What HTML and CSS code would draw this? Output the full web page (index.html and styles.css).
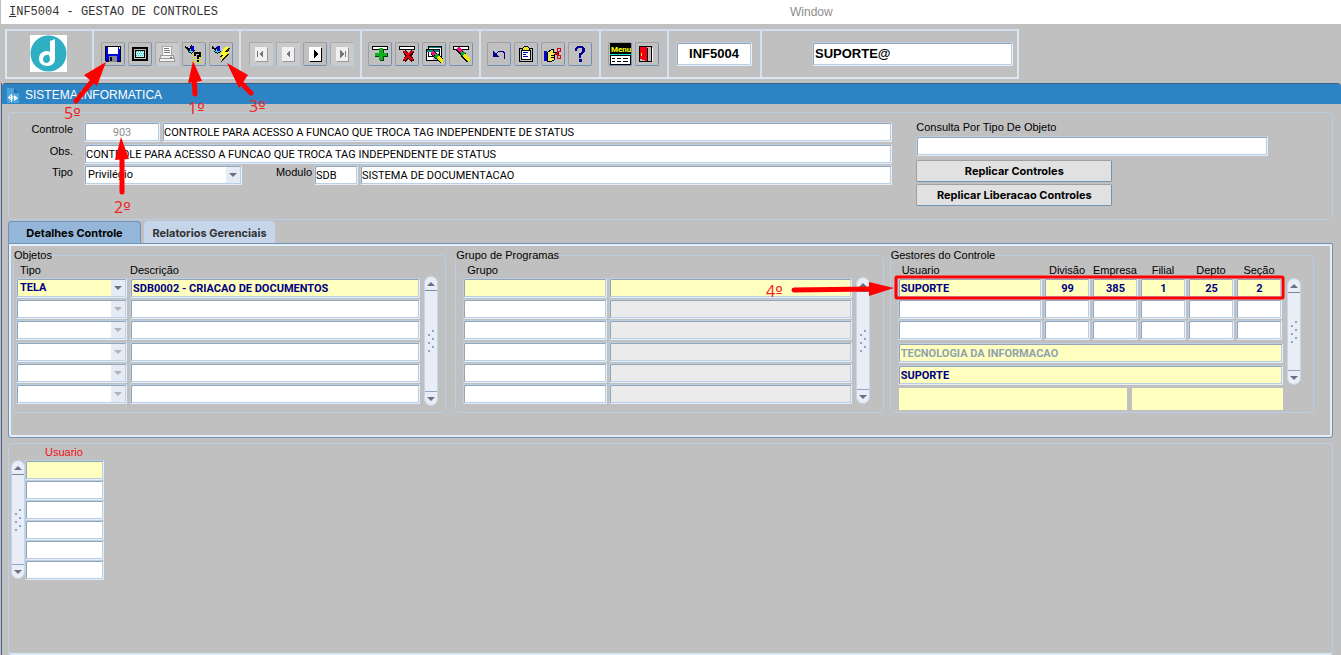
FILE: index.html
```html
<!DOCTYPE html>
<html lang="pt-BR">
<head>
<meta charset="utf-8">
<title>INF5004 - Gestao de Controles</title>
<link rel="stylesheet" href="styles.css">
</head>
<body>
<header class="menubar">
  <h1 class="menubar-title"><u>I</u>NF5004 - GESTAO DE CONTROLES</h1>
  <span class="menubar-window">Window</span>
</header>

<div class="toolbar-area">
  <div class="toolbar">
    <div class="group group-logo">
      <svg class="logo" viewBox="0 0 37 37" aria-label="Logo" role="img">
        <rect width="37" height="37" fill="#fff"/>
        <circle cx="18.500" cy="18.500" r="18" fill="#2fafc3"/>
        <path d="M20 6l5-2v19q0 8-8 8-8-1-8-7 0-7 7-8 3 0 4 1zM19 20q-5-1-6 4 0 4 4 4 3-1 3-4z" fill="#fff" fill-rule="evenodd"/>
      </svg>
    </div>
    <div class="group group-file">
      <button class="tool" aria-label="Salvar"><svg class="icon" viewBox="0 0 18 18"><path fill="#0000e8" stroke="#000" d="M1.500 1.500h15v15h-14l-1-1z"/><path fill="#fff" d="M4 2h10v7H4z"/><path fill="#888" d="M5 11h8v6H5z"/><path d="M6 12h2v4H6z"/><path fill="#fff" d="M15 2h1v2h-1z"/></svg></button>
      <button class="tool" aria-label="Tela"><svg class="icon" viewBox="0 0 18 18"><path fill="#c0c0c0" stroke="#000" stroke-width="2" d="M2 3h14v12H2z"/><path fill="#b8f4f4" stroke="#000" d="M4.500 5.500h9v7h-9z"/><path fill="none" stroke="#35bcbc" stroke-dasharray="1 1" d="M5 6.500h8M6 8.500h7M5 10.500h8"/></svg></button>
      <button class="tool off" aria-label="Imprimir" disabled><svg class="icon" viewBox="0 0 18 18"><path fill="#fff" stroke="#aaa" d="M4.500 1.500h9v9h-9z"/><path stroke="#777" d="M6 3.500h5M6 5.500h6M6 7.500h6"/><path fill="#f0f0f0" stroke="#999" d="M2.500 10.500h13v3h-13zM1.500 13.500h15v3h-15z"/><path fill="#666" d="M12 12h2v1h-2z"/></svg></button>
      <button class="tool" aria-label="Entrar consulta"><svg class="icon" viewBox="0 0 18 18"><path stroke="#000" stroke-width="2" d="M0 2l5 3"/><path fill="#39d8ec" stroke="#000" d="M3.500 6.500l3-6 3 5-3 3z"/><path fill="#0000d8" d="M6 1h3v5H6z"/><path fill="none" stroke="#e8e800" stroke-width="10" stroke-dasharray="1 1" d="M8 12.500h10"/><path fill="none" stroke="#c0c0c0" stroke-dasharray="1 1" d="M8 9.500h10M8 11.500h10M8 13.500h10M8 15.500h10"/><path fill="none" stroke="#000" stroke-width="2" d="M10 11V8h5v3h-2v3"/><path d="M12 15h2v2h-2z"/></svg></button>
      <button class="tool" aria-label="Executar consulta"><svg class="icon" viewBox="0 0 18 18"><path stroke="#000" stroke-width="2" d="M0 2l4 3"/><path fill="#39d8ec" stroke="#000" d="M2.500 6.500l3-5 3 5-3 2z"/><path fill="#0000d8" d="M5 1h3v5H5z"/><path fill="#222" d="M15 3h3l-3 6h2l-8 9 2-6H8z"/><path fill="#ffff20" d="M13 2h4l-4 5h4l-9 10 3-7H8z"/></svg></button>
    </div>
    <div class="group group-nav">
      <button class="tool off" aria-label="Primeiro" disabled><svg class="icon" viewBox="0 0 18 18"><path fill="#999" d="M4 3h12v14H4z"/><path fill="#f0f0f0" d="M3 2h12v14H3z"/><path fill="#777" d="M5 6h1v6H5zM11 5v8L7 9z"/></svg></button>
      <button class="tool off" aria-label="Anterior" disabled><svg class="icon" viewBox="0 0 18 18"><path fill="#999" d="M4 3h12v14H4z"/><path fill="#f0f0f0" d="M3 2h12v14H3z"/><path fill="#777" d="M11 5v8L7 9z"/></svg></button>
      <button class="tool" aria-label="Proximo"><svg class="icon" viewBox="0 0 18 18"><path d="M4 3h12v14H4z"/><path fill="#fff" d="M3 2h12v14H3z"/><path d="M8 5v8l4-4z"/></svg></button>
      <button class="tool off" aria-label="Ultimo" disabled><svg class="icon" viewBox="0 0 18 18"><path fill="#999" d="M4 3h12v14H4z"/><path fill="#f0f0f0" d="M3 2h12v14H3z"/><path fill="#777" d="M12 6h1v6h-1zM7 5v8l4-4z"/></svg></button>
    </div>
    <div class="group group-edit">
      <button class="tool" aria-label="Inserir registro"><svg class="icon" viewBox="0 0 18 18"><path fill="#fff" stroke="#000" d="M1.500 1.500h15v3h-15z"/><path fill="#004000" d="M9 4h4v4h4v4h-4v4H9v-4H4V9h5z"/><path fill="#10b020" d="M8 3h4v5h4v3h-4v4H8v-4H4V8h4z"/></svg></button>
      <button class="tool" aria-label="Excluir registro"><svg class="icon" viewBox="0 0 18 18"><path fill="#fff" stroke="#000" d="M1.500 1.500h15v3h-15z"/><path fill="none" stroke="#500" stroke-width="4" d="M6 6l9 10M15 6L6 16"/><path fill="none" stroke="#d80010" stroke-width="2" d="M6 6l8 9M14 6l-8 9"/></svg></button>
      <button class="tool" aria-label="Limpar bloco"><svg class="icon" viewBox="0 0 18 18"><path fill="#fff" stroke="#000" d="M3.500 1.500h13v10h-13zM1.500 4.500h13v11h-13z"/><path fill="#008888" d="M4 2h12v1H4zM2 5h12v2H2z"/><path fill="#c0c0c0" d="M8 8h6v7H8z"/><path stroke="#000" stroke-width="5" d="M7 7l10 9"/><path stroke="#f01080" stroke-width="4" d="M7 7l3 3"/><path stroke="#00b030" stroke-width="4" d="M10 10l3 2"/><path stroke="#f4e800" stroke-width="4" d="M13 12l5 5"/></svg></button>
      <button class="tool" aria-label="Limpar registro"><svg class="icon" viewBox="0 0 18 18"><path fill="#fff" stroke="#000" d="M1.500 1.500h15v3h-15z"/><path stroke="#000" stroke-width="5" d="M6 4l11 12"/><path stroke="#f01080" stroke-width="4" d="M6 3l4 4"/><path stroke="#00b030" stroke-width="4" d="M10 7l2 3"/><path stroke="#f4e800" stroke-width="4" d="M12 10l6 6"/></svg></button>
    </div>
    <div class="group group-help">
      <button class="tool" aria-label="Desfazer"><svg class="icon" viewBox="0 0 18 18"><path fill="none" stroke="#000080" d="M5 10l4-4h3q5 2 2 8"/><path fill="#000080" d="M3 6v6h6z"/></svg></button>
      <button class="tool" aria-label="Colar"><svg class="icon" viewBox="0 0 18 18"><path fill="#c0c0c0" stroke="#000" d="M2.500 3.500h13v13h-13z"/><path fill="#fff" stroke="#000" d="M4.500 5.500h9v9h-9z"/><path fill="#f4e820" stroke="#000" d="M5.500 5.500v-2l2-2h3l2 2v2z"/><path stroke="#0000c0" d="M6 7.500h5M6 9.500h3M6 11.500h5"/></svg></button>
      <button class="tool" aria-label="Recortar"><svg class="icon" viewBox="0 0 18 18"><path fill="#0000d0" d="M0 6h3v10H0z"/><path fill="#f4e850" stroke="#000" d="M3.500 7.500l4-3h2v3h5v2h-4v5l-3 2h-4z"/><path stroke="#000" d="M7 10.500h4M7 12.500h4"/><g fill="none" stroke="#e00010"><circle cx="15" cy="5" r="2"/><circle cx="15" cy="12" r="2"/><path d="M11 10l4-3M11 8l4 2"/></g></svg></button>
      <button class="tool" aria-label="Ajuda"><svg class="icon" viewBox="0 0 18 18"><path fill="none" stroke="#000090" stroke-width="2" d="M5 6V4q1-2 4-2 4 0 4 3 0 3-4 4v4"/><path fill="#000090" d="M11 3h3v4h-3zM8 14h3v3H8z"/></svg></button>
    </div>
    <div class="group group-menu">
      <button class="tool" aria-label="Menu"><svg class="icon icon-large" viewBox="0 0 22 22"><path d="M1 0h21v11H1z"/><text class="menu-glyph" x="2" y="9">Menu</text><path fill="#00e0e0" d="M1 11h21v1H1z"/><path fill="#fff" stroke="#000" d="M1.500 12.500h20v9h-20z"/><path fill="none" stroke="#000" d="M3 15.500h3M8 15.500h4M14 15.500h5M3 18.500h3M8 18.500h4M14 18.500h5"/></svg></button>
      <button class="tool" aria-label="Sair"><svg class="icon" viewBox="0 0 18 18"><path fill="#c0c0c0" stroke="#000" d="M1.500 1.500h12v15h-12z"/><path fill="#fff" d="M14 16h1V3h-1z"/><path fill="#f00010" d="M2 2h7v14l-7-2z"/><path stroke="#000" d="M9.500 3v13"/><path fill="#ff0" d="M3 8h1v3H3z"/></svg></button>
    </div>
    <div class="group group-code"><input class="field tall code" aria-label="Programa" value="INF5004"></div>
    <div class="group group-user"><input class="field tall user" aria-label="Usuario conectado" value="SUPORTE@"></div>
  </div>
</div>

<main class="window">
  <h2 class="titlebar">
    <svg class="title-icon" viewBox="0 0 12 15"><path fill="#4da2dc" d="M0 0h7l5 5v10H0z"/><path fill="#2370ac" d="M7 0l5 5H7z"/><circle cx="4" cy="9.500" r="2" fill="none" stroke="#fff"/><path fill="#fff" d="M7 7l4 3-4 3zM4 6h1v8H4zM1 9h3v1H1z"/></svg>
    SISTEMA INFORMATICA
  </h2>

  <section class="panel head">
    <div class="head-main">
      <label class="lbl" for="controle">Controle</label>
      <div class="line">
        <input class="field num" id="controle" value="903" disabled>
        <input class="field grow" aria-label="Nome do controle" value="CONTROLE PARA ACESSO A FUNCAO QUE TROCA TAG INDEPENDENTE DE STATUS">
      </div>
      <label class="lbl" for="obs">Obs.</label>
      <div class="line"><input class="field grow" id="obs" value="CONTROLE PARA ACESSO A FUNCAO QUE TROCA TAG INDEPENDENTE DE STATUS"></div>
      <label class="lbl" for="tipo">Tipo</label>
      <div class="line">
        <span class="combo combo-tipo"><select class="field" id="tipo"><option>Privilégio</option></select></span>
        <label class="lbl lbl-mod" for="modulo">Modulo</label>
        <input class="field mod" id="modulo" value="SDB">
        <input class="field grow" aria-label="Nome do modulo" value="SISTEMA DE DOCUMENTACAO">
      </div>
    </div>
    <div class="head-side">
      <label for="consulta">Consulta Por Tipo De Objeto</label>
      <input class="field" id="consulta">
      <button class="push">Replicar Controles</button>
      <button class="push">Replicar Liberacao Controles</button>
    </div>
  </section>

  <nav class="tabs">
    <button class="tab active">Detalhes Controle</button>
    <button class="tab">Relatorios Gerenciais</button>
  </nav>

  <section class="tabpanel">
    <fieldset class="box box-obj">
      <legend>Objetos</legend>
      <div class="box-body">
        <table class="grid">
          <colgroup><col class="c-tipo"><col></colgroup>
          <thead><tr><th>Tipo</th><th class="flush">Descrição</th></tr></thead>
          <tbody>
            <tr class="cur"><td><span class="combo"><select class="field" aria-label="Tipo 1"><option>TELA</option></select></span></td><td><input class="field" aria-label="Descrição 1" value="SDB0002 - CRIACAO DE DOCUMENTOS"></td></tr>
            <tr><td><span class="combo off"><select class="field" aria-label="Tipo 2" disabled></select></span></td><td><input class="field" aria-label="Descrição 2"></td></tr>
            <tr><td><span class="combo off"><select class="field" aria-label="Tipo 3" disabled></select></span></td><td><input class="field" aria-label="Descrição 3"></td></tr>
            <tr><td><span class="combo off"><select class="field" aria-label="Tipo 4" disabled></select></span></td><td><input class="field" aria-label="Descrição 4"></td></tr>
            <tr><td><span class="combo off"><select class="field" aria-label="Tipo 5" disabled></select></span></td><td><input class="field" aria-label="Descrição 5"></td></tr>
            <tr><td><span class="combo off"><select class="field" aria-label="Tipo 6" disabled></select></span></td><td><input class="field" aria-label="Descrição 6"></td></tr>
          </tbody>
        </table>
        <div class="scroll"><button class="sb up" aria-label="Subir"></button><span class="grip"></span><button class="sb down" aria-label="Descer"></button></div>
      </div>
    </fieldset>

    <fieldset class="box box-grp">
      <legend>Grupo de Programas</legend>
      <div class="box-body">
        <table class="grid">
          <colgroup><col class="c-grupo"><col></colgroup>
          <thead><tr><th>Grupo</th><th></th></tr></thead>
          <tbody>
            <tr class="cur"><td><input class="field" aria-label="Grupo 1"></td><td><input class="field" aria-label="Nome 1" readonly></td></tr>
            <tr><td><input class="field" aria-label="Grupo 2"></td><td><input class="field ro" aria-label="Nome 2" readonly></td></tr>
            <tr><td><input class="field" aria-label="Grupo 3"></td><td><input class="field ro" aria-label="Nome 3" readonly></td></tr>
            <tr><td><input class="field" aria-label="Grupo 4"></td><td><input class="field ro" aria-label="Nome 4" readonly></td></tr>
            <tr><td><input class="field" aria-label="Grupo 5"></td><td><input class="field ro" aria-label="Nome 5" readonly></td></tr>
            <tr><td><input class="field" aria-label="Grupo 6"></td><td><input class="field ro" aria-label="Nome 6" readonly></td></tr>
          </tbody>
        </table>
        <div class="scroll"><button class="sb up" aria-label="Subir"></button><span class="grip"></span><button class="sb down" aria-label="Descer"></button></div>
      </div>
    </fieldset>

    <fieldset class="box box-ges">
      <legend>Gestores do Controle</legend>
      <div class="box-body">
        <div class="ges-main">
          <table class="grid">
            <colgroup><col><col class="c-cod"><col class="c-cod"><col class="c-cod"><col class="c-cod"><col class="c-cod"></colgroup>
            <thead><tr><th>Usuario</th><th class="mid">Divisão</th><th class="mid">Empresa</th><th class="mid">Filial</th><th class="mid">Depto</th><th class="mid">Seção</th></tr></thead>
            <tbody>
              <tr class="cur"><td><input class="field" aria-label="Usuario 1" value="SUPORTE"></td><td><input class="field mid" aria-label="Divisão 1" value="99"></td><td><input class="field mid" aria-label="Empresa 1" value="385"></td><td><input class="field mid" aria-label="Filial 1" value="1"></td><td><input class="field mid" aria-label="Depto 1" value="25"></td><td><input class="field mid" aria-label="Seção 1" value="2"></td></tr>
              <tr><td><input class="field" aria-label="Usuario 2"></td><td><input class="field" aria-label="Divisão 2"></td><td><input class="field" aria-label="Empresa 2"></td><td><input class="field" aria-label="Filial 2"></td><td><input class="field" aria-label="Depto 2"></td><td><input class="field" aria-label="Seção 2"></td></tr>
              <tr><td><input class="field" aria-label="Usuario 3"></td><td><input class="field" aria-label="Divisão 3"></td><td><input class="field" aria-label="Empresa 3"></td><td><input class="field" aria-label="Filial 3"></td><td><input class="field" aria-label="Depto 3"></td><td><input class="field" aria-label="Seção 3"></td></tr>
            </tbody>
          </table>
          <div class="info">
            <input class="field hl soft" aria-label="Departamento" value="TECNOLOGIA DA INFORMACAO" readonly>
            <input class="field hl" aria-label="Nome do gestor" value="SUPORTE" readonly>
            <div class="plates"><span class="plate plate-a"></span><span class="plate plate-b"></span></div>
          </div>
        </div>
        <div class="scroll scroll-short"><button class="sb up" aria-label="Subir"></button><span class="grip"></span><button class="sb down" aria-label="Descer"></button></div>
      </div>
    </fieldset>
  </section>

  <section class="panel users">
    <h3 class="users-title">Usuario</h3>
    <div class="users-body">
      <div class="scroll scroll-users"><button class="sb up" aria-label="Subir"></button><span class="grip"></span><button class="sb down" aria-label="Descer"></button></div>
      <div class="users-list">
        <input class="field hl" aria-label="Usuario liberado 1">
        <input class="field" aria-label="Usuario liberado 2">
        <input class="field" aria-label="Usuario liberado 3">
        <input class="field" aria-label="Usuario liberado 4">
        <input class="field" aria-label="Usuario liberado 5">
        <input class="field" aria-label="Usuario liberado 6">
      </div>
    </div>
  </section>
</main>

<svg class="notes" viewBox="0 0 1341 655" width="1341" height="655">
  <g class="note-line">
    <path d="M76 101L94 79M195 94L194 78M251 93L240 82M122 192V158M794 290L870 289"/>
  </g>
  <path class="note-head" d="M106 62L97 86 84 75zM193 61L202 81 188 83zM227 63L248 75 239 88zM121 137L129 159 115 160zM894 288L869 296V282z"/>
  <g class="note-text">
    <text x="64" y="119">5<tspan class="ord">º</tspan></text><text x="188" y="114">1<tspan class="ord">º</tspan></text><text x="249" y="112">3<tspan class="ord">º</tspan></text><text x="114" y="213">2<tspan class="ord">º</tspan></text><text x="766" y="297">4<tspan class="ord">º</tspan></text>
  </g>
  <rect class="note-frame" x="896" y="277" width="387" height="21" rx="1"/>
</svg>
</body>
</html>
```
FILE: styles.css
```css
* { box-sizing: border-box; }

body {
  margin: 0;
  min-height: 100vh;
  display: flex;
  flex-direction: column;
  position: relative;
  background: #c0c0c0;
  color: #000;
  font: 11px/12px "Liberation Sans", Arial, sans-serif;
}

h1, h2, h3 { margin: 0; font-weight: normal; }
button, input, select { font: inherit; color: inherit; margin: 0; }

/* Menu bar */
.menubar {
  height: 24px;
  display: flex;
  align-items: center;
  padding-left: 8px;
  background: #fff;
  border-left: 1px solid #c0c0c0;
}
.menubar-title {
  width: 781px;
  font: 12px/16px "Liberation Mono", "Courier New", monospace;
  color: #333;
}
.menubar-window { font-size: 12px; line-height: 16px; color: #8c8c8c; }

/* Toolbar */
.toolbar-area { padding: 5px 5px 4px; display: flex; }
.toolbar {
  display: flex;
  height: 50px;
  border: 2px solid #dbe7f5;
  border-top-color: #d0deef;
}
.group {
  display: flex;
  align-items: center;
  gap: 3px;
  padding: 0 0 1px 7px;
  border-left: 2px solid #d5e2f2;
}
.group-logo { width: 85px; padding-left: 23px; border-left: 0; }
.group-file { width: 147px; }
.group-nav { width: 121px; padding-left: 8px; }
.group-edit { width: 119px; padding-left: 6px; }
.group-help { width: 120px; padding-left: 6px; }
.group-menu { width: 68px; }
.group-code { width: 93px; }
.group-user { width: 257px; padding-left: 50px; }
.logo { width: 37px; height: 37px; }
.tool {
  width: 24px;
  height: 24px;
  padding: 0;
  display: flex;
  align-items: center;
  justify-content: center;
  background: #c0c0c0;
  border: 1px solid;
  border-color: #a0a0a0 #6f92b8 #6f92b8 #a0a0a0;
  border-radius: 2px;
}
.tool.off { background: #cacaca; border-color: #aaa #b8cfe5 #b8cfe5 #aaa; }
.icon { width: 18px; height: 18px; flex: none; shape-rendering: crispEdges; }
.icon-large { width: 22px; height: 22px; }
.menu-glyph { font: bold 8px Roboto, "Liberation Sans", sans-serif; fill: #ff0; }

/* Fields */
.field {
  display: block;
  width: 100%;
  min-width: 0;
  height: 20px;
  padding: 0 1px;
  font-family: Roboto, "Liberation Sans", sans-serif;
  background: #fff;
  border: 1px solid;
  border-color: #b8cfe5 #e6eef8 #e6eef8 #b8cfe5;
  border-radius: 2px;
  box-shadow: inset 1px 1px 0 #98a4b4, inset -1px -1px 0 #b8cfe5;
  outline: 0;
  appearance: none;
}
.field.tall { height: 24px; font: bold 13px "Liberation Sans", Arial, sans-serif; }
.field.code { width: 76px; text-align: center; }
.field.user { width: 201px; padding-left: 2px; }
.field.mid { text-align: center; }
.field.ro { background: #ebebeb; }
.field.hl, .cur .field { background: #ffffc0; color: #000080; font-weight: bold; padding-left: 2px; }
.field.soft { color: #8fa3ae; }

.combo { display: block; position: relative; }
.combo::before {
  content: "";
  position: absolute;
  top: 2px;
  right: 2px;
  bottom: 2px;
  width: 14px;
  background: #e6ecf5;
}
.combo::after {
  content: "";
  position: absolute;
  top: 8px;
  right: 5px;
  border: 4px solid transparent;
  border-top: 4px solid #6b6f88;
  border-bottom: 0;
}
.combo.off::after { border-top-color: #b4b4b4; }
.combo .field, .cur .combo .field { padding-left: 3px; opacity: 1; }

/* Main window */
.window {
  flex: 1;
  display: flex;
  flex-direction: column;
  margin-left: 1px;
  border-left: 1px solid #46648c;
}
.titlebar {
  height: 21px;
  display: flex;
  align-items: center;
  gap: 6px;
  padding: 2px 5px 0;
  background: #2c84c4;
  border-top: 1px solid #3c5f86;
  border-radius: 4px 4px 0 0;
  color: #fff;
  font-size: 12px;
}
.title-icon { width: 12px; height: 15px; }

.panel { border: 1px solid #b8cde6; border-radius: 4px; margin: 0 8px 0 6px; }
.head {
  display: flex;
  gap: 24px;
  height: 108px;
  margin-top: 8px;
  padding: 9px 0 0;
}
.head-main {
  flex: 884 1 0;
  display: grid;
  grid-template-columns: 75px minmax(0, 1fr);
  grid-template-rows: 22px 21px 20px;
}
.lbl { text-align: right; padding: 1px 11px 0 0; }
.line { display: flex; gap: 2px; }
.grow { flex: 1; }
.field.num { width: 76px; text-align: center; color: #8c8c8c; }
.combo-tipo { width: 158px; }
.lbl-mod { width: 68px; padding-right: 0; }
.field.mod { width: 44px; }
.head-side { flex: 416 1 0; display: flex; flex-direction: column; align-items: flex-start; }
.head-side label { line-height: 11px; }
.head-side .field { width: 352px; max-width: 96%; margin: 3px 0 4px; }
.push {
  width: 196px;
  height: 22px;
  margin-bottom: 2px;
  padding: 0;
  font: bold 11px Inter, "Liberation Sans", sans-serif;
  background: #e1e1e1;
  border: 1px solid;
  border-color: #a0a0a0 #6f92b8 #6f92b8 #a0a0a0;
  border-radius: 2px;
}

/* Tabs */
.tabs { display: flex; gap: 3px; margin: 1px 6px 0; height: 22px; }
.tab {
  padding: 2px 3px 0 3px;
  font: bold 11px Inter, "Liberation Sans", sans-serif;
  color: #333;
  background: #c5d5ea;
  border: 0;
  border-radius: 4px 4px 0 0;
  width: 131px;
  white-space: nowrap;
}
.tab.active {
  width: 133px;
  padding-top: 1px;
  color: #000;
  background: #94b7d9;
  border: 1px solid #6f92b8;
  border-bottom: 0;
}
.tabpanel {
  display: flex;
  height: 195px;
  margin: 0 8px 0 6px;
  padding: 4px 18px 0 4px;
  border: 1px solid #6f92b8;
  border-radius: 0 2px 3px 3px;
  box-shadow: inset 0 0 0 2px #e6eef8;
}
.box {
  min-width: 0;
  height: 165px;
  margin: 0;
  padding: 0;
  border: 1px solid #b8cde6;
  border-radius: 4px;
}
.box legend { padding: 0; line-height: 14px; }
.box-obj { flex: 433 1 0; margin-right: 9px; }
.box-grp { flex: 428 1 0; margin-right: 6px; }
.box-ges { flex: 424 1 0; }
.box-body { display: flex; gap: 2px; padding: 1px 7px 0 2px; }
.box-grp .box-body { padding: 1px 13px 0 7px; }
.box-ges .box-body { gap: 3px; padding: 1px 12px 0 7px; }

.grid { flex: 1; width: 100%; table-layout: fixed; border-collapse: collapse; }
.grid th { height: 15px; padding: 0 0 0 4px; font-weight: normal; text-align: left; vertical-align: top; line-height: 14px; }
.grid th.flush { padding-left: 0; }
.grid th.mid { padding: 0 2px 0 0; text-align: center; }
.grid td { height: 21px; padding: 0 2px 0 0; vertical-align: top; }
.grid tbody tr:nth-child(3n) td { height: 22px; }
.c-tipo { width: 114px; }
.c-grupo { width: 146px; }
.c-cod { width: 48px; }
.box-obj td:first-child { padding-right: 3px; }
.ges-main { flex: 1; min-width: 0; }
.ges-main .grid tbody tr:last-child td { height: 23px; }
.info { display: grid; row-gap: 2px; padding-right: 1px; }
.plates { display: flex; gap: 5px; padding: 1px 0 0 1px; }
.plate { height: 22px; background: #ffffc0; }
.plate-a { flex: 228 1 0; }
.plate-b { flex: 151 1 0; }

/* Scroll bars */
.scroll {
  width: 14px;
  height: 130px;
  margin-top: 13px;
  flex: none;
  display: flex;
  flex-direction: column;
  align-items: center;
  background: #e8edf6;
  border: 1px solid #c6d6ea;
  border-radius: 7px;
}
.box-grp .scroll { height: 127px; margin-top: 14px; }
.box-ges .scroll { height: 107px; margin-top: 15px; }
.scroll-users { height: 119px; margin-top: 0; }
.sb { width: 12px; height: 14px; padding: 0 2px; background: none; border: 0 solid #7c86a2; }
.sb::before { content: ""; display: block; border: 4px solid transparent; }
.sb.up { border-bottom-width: 1px; }
.sb.up::before { border-top: 0; border-bottom-color: #6b6f88; }
.sb.down { border-top: 1px solid #8ba6c6; }
.sb.down::before { border-bottom: 0; border-top-color: #6b6f88; }
.grip {
  width: 8px;
  margin: auto 0;
  height: 24px;
  background:
    radial-gradient(circle at 6px 2px, #8ba6c6 1px, transparent 1px) 0 0 / 8px 8px,
    radial-gradient(circle at 2px 6px, #8ba6c6 1px, transparent 1px) 0 0 / 8px 8px;
}

/* Users block */
.users { flex: 1; margin-top: 5px; padding: 1px 2px; border-bottom: 2px solid #dbe7f5; }
.users-title { padding-left: 34px; font-size: 11px; line-height: 14px; color: #f01020; }
.users-body { display: flex; padding-top: 1px; }
.users-list { width: 79px; }

/* Step markers over the form */
.notes { position: absolute; top: 0; left: 0; pointer-events: none; }
.note-line { fill: none; stroke: #f00; stroke-width: 5; stroke-linecap: round; }
.note-head { fill: #f00; }
.note-text { fill: #f02020; font: 16px "Open Sans", "Noto Sans", sans-serif; }
.ord { font-family: "DejaVu Sans", sans-serif; }
.note-frame { fill: none; stroke: #f00; stroke-width: 3; }
```
